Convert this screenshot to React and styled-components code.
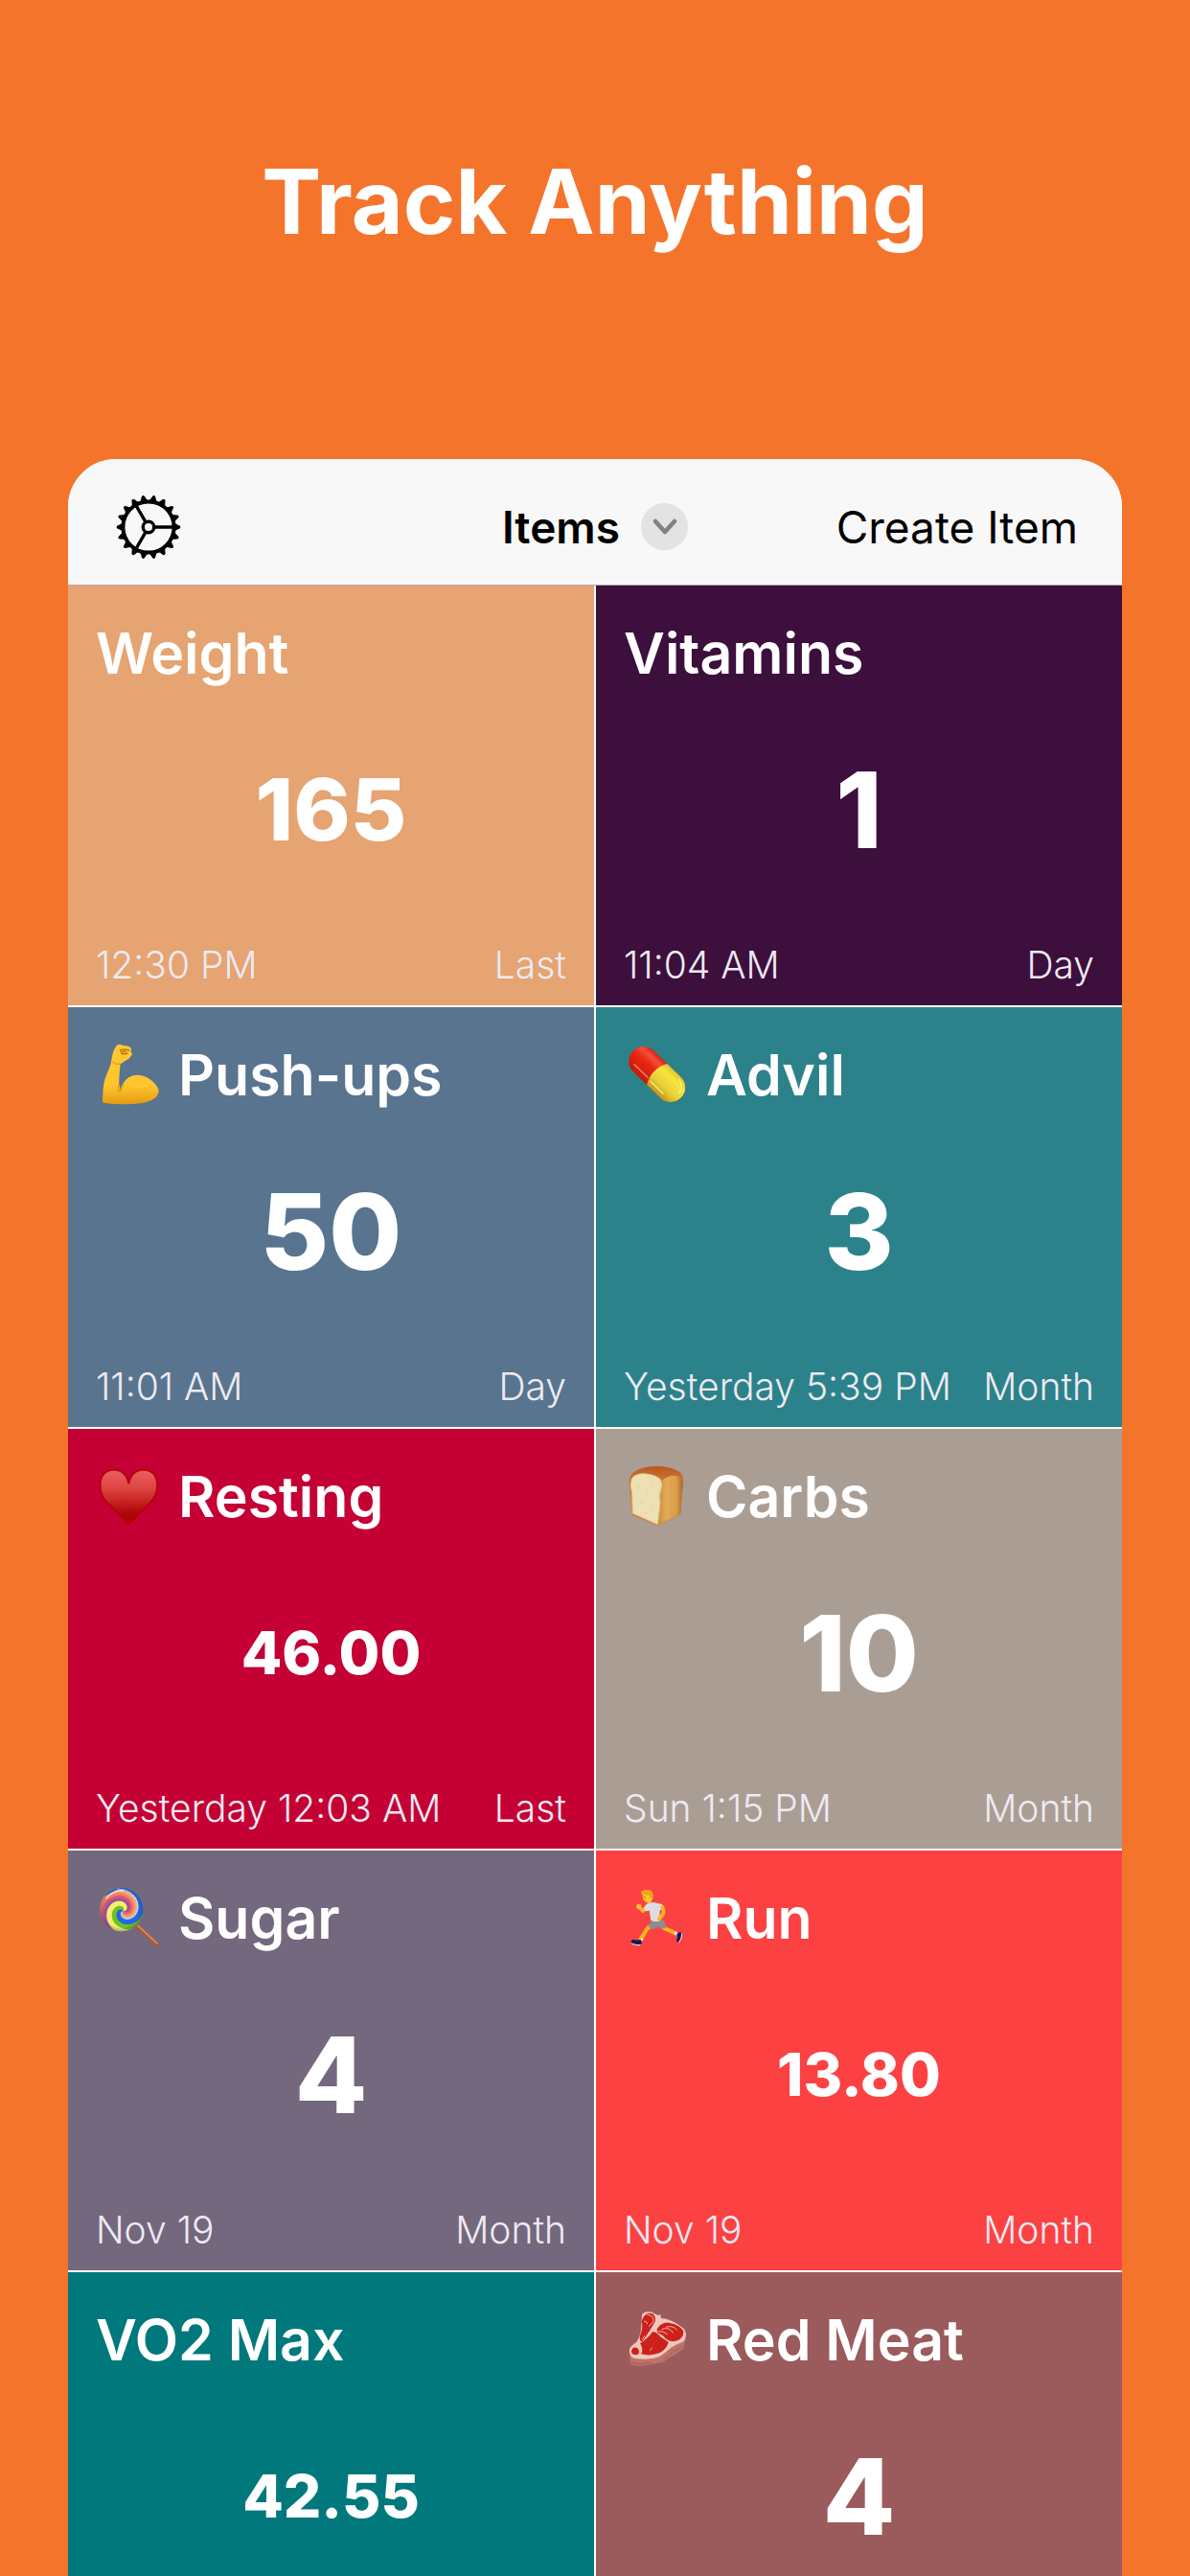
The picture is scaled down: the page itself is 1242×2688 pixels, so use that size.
import React from "react";
import styled, { createGlobalStyle } from "styled-components";

const teeth = Array.from({ length: 18 }, (_, i) => i * 20);

function GearIcon() {
  return (
    <svg width="76" height="76" viewBox="-38 -38 76 76" aria-hidden="true">
      {teeth.map((angle) => (
        <path
          key={angle}
          transform={`rotate(${angle})`}
          d="M27 -4.4 Q29.6 -2.6 32.6 -1.5 Q34.4 0 32.6 1.5 Q29.6 2.6 27 4.4 Z"
        />
      ))}
      <g fill="none" stroke="#000">
        <circle r="26.6" strokeWidth="4" />
        <circle r="5.8" strokeWidth="3.4" />
        {[0, 120, 240].map((angle) => (
          <path key={angle} d="M7 0H26" strokeWidth="3.4" transform={`rotate(${angle})`} />
        ))}
      </g>
    </svg>
  );
}

function ArmIcon() {
  return (
    <svg viewBox="3 60 204 192" aria-hidden="true">
      <defs>
        <linearGradient id="arm" x1="0" y1="0" x2="0" y2="1">
          <stop offset="0" stopColor="#ffc932" />
          <stop offset="0.7" stopColor="#ffc42e" />
          <stop offset="1" stopColor="#e39a12" />
        </linearGradient>
      </defs>
      <path
        fill="url(#arm)"
        d="M70 61 Q76 57 85 62 L97 64 Q106 64 112 70 Q116 75 112 82 Q119 87 115 94 Q108 106 96 110 L80 121 Q75 160 76 184 L79 200 Q88 176 107 162 Q132 149 160 161 Q187 174 199 199 Q202 215 189 227 Q165 244 128 245 Q70 250 26 242 Q22 238 25 219 Q25 181 36 155 Q47 130 51 116 Q54 80 70 61Z"
      />
      <path fill="none" stroke="#b96f08" strokeWidth="4" d="M79 78 Q94 73 108 78 M82 84 Q91 94 103 86 M81 80 L87 92 M87 82 L98 81" />
      <path fill="none" stroke="#d58b10" strokeWidth="3" d="M55 114 Q66 125 79 120 M76 184 Q69 205 79 207 Q84 194 91 184" />
    </svg>
  );
}

function PillIcon() {
  return (
    <svg viewBox="3 60 204 192" aria-hidden="true">
      <defs>
        <linearGradient id="pillRed" x1="0" y1="0" x2="0" y2="1">
          <stop offset="0" stopColor="#d9200f" />
          <stop offset="0.2" stopColor="#f4503c" />
          <stop offset="0.45" stopColor="#ea2812" />
          <stop offset="1" stopColor="#c8180a" />
        </linearGradient>
        <linearGradient id="pillYellow" x1="0" y1="0" x2="0" y2="1">
          <stop offset="0" stopColor="#e2c52c" />
          <stop offset="0.25" stopColor="#f6e640" />
          <stop offset="0.65" stopColor="#e8d038" />
          <stop offset="1" stopColor="#c0941c" />
        </linearGradient>
      </defs>
      <g transform="translate(107 153) rotate(44)">
        <rect x="-105" y="-46" width="210" height="92" rx="46" fill="url(#pillRed)" />
        <path fill="url(#pillYellow)" d="M0 -46 H59 A46 46 0 0 1 59 46 H0 Q-26 0 0 -46Z" />
        <path fill="none" stroke="#fff" strokeOpacity="0.4" strokeWidth="5" strokeLinecap="round" d="M-72 27 H-14" />
        <path fill="none" stroke="#fff6a0" strokeOpacity="0.8" strokeWidth="4" strokeLinecap="round" d="M0 30 H56 M62 -36 Q88 -30 92 -6" />
      </g>
    </svg>
  );
}

function HeartIcon() {
  return (
    <svg viewBox="33 60 204 192" aria-hidden="true">
      <defs>
        <linearGradient id="heart" x1="0" y1="0" x2="0" y2="1">
          <stop offset="0" stopColor="#ea6060" />
          <stop offset="0.35" stopColor="#dd4441" />
          <stop offset="0.8" stopColor="#b00505" />
          <stop offset="1" stopColor="#a80000" />
        </linearGradient>
      </defs>
      <path
        fill="url(#heart)"
        stroke="#b20309"
        strokeWidth="5"
        d="M136 115 Q127 71 88 71 Q47 75 47 120 Q47 152 70 175 Q90 193 110 216 Q124 232 136 242 Q148 232 162 216 Q182 193 202 175 Q225 152 225 120 Q225 75 184 71 Q145 71 136 115Z"
      />
    </svg>
  );
}

function BreadIcon() {
  return (
    <svg viewBox="3 60 204 192" aria-hidden="true">
      <defs>
        <linearGradient id="crust" x1="0" y1="0" x2="1" y2="0">
          <stop offset="0" stopColor="#c98c45" />
          <stop offset="0.35" stopColor="#e2ab55" />
          <stop offset="0.75" stopColor="#d99b47" />
          <stop offset="1" stopColor="#a8662a" />
        </linearGradient>
        <linearGradient id="crustTop" x1="0" y1="0" x2="0" y2="1">
          <stop offset="0" stopColor="#b95820" />
          <stop offset="0.3" stopColor="#cf7c3c" />
          <stop offset="1" stopColor="#c98340" />
        </linearGradient>
      </defs>
      <path fill="url(#crustTop)" d="M21 124 Q17 106 23 94 Q36 67 88 61 Q139 57 174 75 Q194 88 189 117 L181 211 L109 247 L28 213Z" />
      <path fill="url(#crust)" d="M113 121 Q124 96 150 90 Q176 85 188 107 Q191 118 185 137 L181 210 L109 244Z" />
      <path fill="#ece0b4" stroke="#dfc68c" strokeWidth="3" d="M28 100 Q36 84 64 83 Q103 86 118 101 Q126 120 118 138 Q111 155 117 174 L109 242 L31 207 L29 142 Q21 122 28 100Z" />
      <g fill="#d3bf86">
        <circle cx="49" cy="126" r="2" />
        <circle cx="77" cy="145" r="2" />
        <circle cx="92" cy="119" r="2" />
        <circle cx="60" cy="174" r="2" />
        <circle cx="91" cy="193" r="2" />
        <circle cx="72" cy="207" r="2" />
      </g>
    </svg>
  );
}

// start and end angle of each stripe at the rim of the candy
const stripes = [
  { from: 175, to: 215, color: "#f4806e" },
  { from: 213, to: 245, color: "#f6a868" },
  { from: 243, to: 265, color: "#b9d8f2" },
  { from: 263, to: 335, color: "#2467e6" },
  { from: 333, to: 395, color: "#6cc41e" },
  { from: 393, to: 465, color: "#f0f070" },
  { from: 463, to: 507, color: "#9c5296" },
  { from: 505, to: 537, color: "#d9566e" },
];

function stripePath({ from, to }) {
  const point = (angle, radius) => {
    const turn = ((angle + (70 - radius) * 4) * Math.PI) / 180;
    return `${(Math.cos(turn) * radius).toFixed(1)} ${(Math.sin(turn) * radius).toFixed(1)}`;
  };
  const radii = Array.from({ length: 29 }, (_, i) => i * 3);
  const out = radii.map((radius) => point(from, radius));
  const back = [...radii].reverse().map((radius) => point(to, radius));
  return `M${[...out, ...back].join("L")}Z`;
}

function LollipopIcon() {
  return (
    <svg viewBox="33 60 204 192" aria-hidden="true">
      <path stroke="#a65c36" strokeWidth="13" strokeLinecap="round" d="M162 179 L224 237" />
      <path stroke="#e28e55" strokeWidth="5" strokeLinecap="round" d="M165 178 L225 234" />
      <defs>
        <clipPath id="candy">
          <circle cx="113" cy="128" r="68" />
        </clipPath>
        <radialGradient id="candyShade">
          <stop offset="0.82" stopColor="#203060" stopOpacity="0" />
          <stop offset="1" stopColor="#203060" stopOpacity="0.35" />
        </radialGradient>
      </defs>
      <g clipPath="url(#candy)">
        <circle cx="113" cy="128" r="68" fill="#f48a70" />
        {stripes.map((stripe) => (
          <path key={stripe.color} fill={stripe.color} transform="translate(119 132)" d={stripePath(stripe)} />
        ))}
      </g>
      <circle cx="113" cy="128" r="68" fill="url(#candyShade)" />
      <path fill="none" stroke="#fff" strokeOpacity="0.6" strokeWidth="5" strokeLinecap="round" d="M66 92 Q87 67 119 68" />
    </svg>
  );
}

function RunnerIcon() {
  return (
    <svg viewBox="3 60 204 192" aria-hidden="true">
      <g fill="none" stroke="#f7b51b" strokeLinecap="round" strokeLinejoin="round">
        <path strokeWidth="11" d="M77 116 L63 132 L50 120" />
        <path strokeWidth="13" d="M83 182 Q73 190 69 200 L56 221" />
        <path strokeWidth="12" d="M126 184 L165 202" />
      </g>
      <ellipse cx="50" cy="118" rx="8" ry="7" fill="#ffc629" />
      <path fill="#e9e9ed" d="M60 216 L52 224 L59 227 L65 220Z M163 196 L174 201 L169 209 L160 205Z" />
      <path fill="#151b52" d="M30 221 Q43 225 56 222 L60 230 L56 239 Q39 238 27 233 Q24 225 30 221Z M172 201 Q179 197 185 201 Q184 216 175 231 Q169 231 168 225 Q173 213 169 207Z" />
      <path fill="none" stroke="#e8e8ec" strokeWidth="3" d="M27 234 Q41 240 56 239 M185 202 Q186 219 175 232" />
      <path fill="#8e8e92" d="M91 158 L126 160 Q136 173 136 184 L121 189 L112 180 L94 191 L80 181Z" />
      <path fill="#dddde1" d="M77 109 Q91 102 106 107 L123 111 L127 121 L116 131 L115 164 Q100 168 88 161 L83 131 L70 133 L65 123Z" />
      <path fill="none" stroke="#f7b51b" strokeWidth="12" strokeLinecap="round" strokeLinejoin="round" d="M124 120 Q131 134 125 143 L114 158" />
      <path fill="#ffc52a" d="M62 83 Q68 68 84 70 Q96 76 94 93 L86 107 Q71 107 66 98 L63 92Z" />
      <path fill="#eda915" d="M58 81 Q55 69 68 67 Q90 62 94 77 Q97 88 88 94 L82 83Z" />
      <circle cx="69" cy="89" r="2" fill="#70480d" />
    </svg>
  );
}

function MeatIcon() {
  return (
    <svg viewBox="3 60 204 192" aria-hidden="true">
      <path fill="#bd7269" d="M21 184 L24 228 Q34 240 66 235 L127 225 Q145 208 159 205 L192 181 L197 132Z" />
      <path fill="#f0c6bb" d="M60 76 Q65 64 88 67 L110 78 L118 75 L120 87 Q151 88 192 120 Q204 139 192 159 Q175 166 154 177 Q130 198 114 208 Q83 220 34 212 Q19 207 21 183 Q25 173 43 162 Q54 145 56 129 L59 97Z" />
      <g fill="#cc211b">
        <path d="M65 83 Q75 69 90 72 Q104 77 102 96 Q86 125 62 160 Q50 161 54 142 Q65 115 59 96Z" />
        <path d="M54 165 Q74 155 94 129 Q107 131 116 143 L143 162 Q138 184 116 195 Q86 207 58 199 Q65 183 54 165Z" />
        <path d="M107 121 Q120 99 144 101 Q179 107 190 127 Q191 148 172 157 Q143 166 126 142 L108 132Z" />
        <path d="M31 181 Q44 174 50 186 Q54 198 43 202 Q26 202 27 190Z" />
      </g>
      <path fill="none" stroke="#f4b2a7" strokeWidth="3" strokeLinecap="round" d="M77 76 Q99 78 96 98 L82 113 M67 96 Q73 94 77 104 M123 121 Q144 112 158 133 M136 114 Q158 109 169 123 M111 128 Q127 125 139 137 M68 143 L61 154 M86 188 L91 180" />
      <path fill="none" stroke="#8d4845" strokeWidth="3" strokeOpacity="0.5" d="M29 226 Q56 233 89 226 M126 219 L158 192 L191 174" />
    </svg>
  );
}

const items = [
  { name: "Weight", value: "165", size: "medium", time: "12:30 PM", period: "Last", color: "#e5a472" },
  { name: "Vitamins", value: "1", size: "large", time: "11:04 AM", period: "Day", color: "#3c0f3c" },
  { name: "Push-ups", icon: ArmIcon, value: "50", size: "large", time: "11:01 AM", period: "Day", color: "#58748f" },
  { name: "Advil", icon: PillIcon, value: "3", size: "large", time: "Yesterday 5:39 PM", period: "Month", color: "#2c828a" },
  { name: "Resting", icon: HeartIcon, value: "46.00", size: "small", time: "Yesterday 12:03 AM", period: "Last", color: "#c40034" },
  { name: "Carbs", icon: BreadIcon, value: "10", size: "large", time: "Sun 1:15 PM", period: "Month", color: "#aa9e94" },
  { name: "Sugar", icon: LollipopIcon, value: "4", size: "large", time: "Nov 19", period: "Month", color: "#73687d" },
  { name: "Run", icon: RunnerIcon, value: "13.80", size: "small", time: "Nov 19", period: "Month", color: "#fc4143" },
  { name: "VO2 Max", value: "42.55", size: "small", color: "#00787c" },
  { name: "Red Meat", icon: MeatIcon, value: "4", size: "large", color: "#9b5a5c" },
];

const valueSizes = { small: "62px", medium: "90px", large: "110px" };

export default function App() {
  return (
    <Page>
      <GlobalStyle />
      <Headline>Track Anything</Headline>
      <Panel>
        <Toolbar>
          <SettingsButton aria-label="Settings">
            <GearIcon />
          </SettingsButton>
          <ListButton>
            Items
            <Chevron>
              <svg width="28" height="20" viewBox="0 0 28 20" aria-hidden="true">
                <path d="M4 4 L14 15 L24 4" fill="none" stroke="#828285" strokeWidth="4.6" strokeLinecap="round" strokeLinejoin="round" />
              </svg>
            </Chevron>
          </ListButton>
          <CreateButton>Create Item</CreateButton>
        </Toolbar>
        <Tiles>
          {items.map((item) => (
            <Tile key={item.name} $color={item.color}>
              <Name>
                {item.icon && <item.icon />}
                {item.name}
              </Name>
              <Value $size={valueSizes[item.size]}>{item.value}</Value>
              <Details>
                <span>{item.time}</span>
                <span>{item.period}</span>
              </Details>
            </Tile>
          ))}
        </Tiles>
      </Panel>
    </Page>
  );
}

const GlobalStyle = createGlobalStyle`
  * {
    box-sizing: border-box;
  }
  body {
    margin: 0;
    background-color: #f4742c;
    font-family: Inter, "Liberation Sans", sans-serif;
  }
  button {
    border: 0;
    padding: 0;
    background: none;
    color: #000000;
    font-family: inherit;
    font-size: 46px;
    line-height: 60px;
  }
`;

const Page = styled.main`
  height: 100vh;
  overflow: hidden;
  padding: 0 71px;
  background-color: #f4742c;
`;

const Headline = styled.h1`
  margin: 0;
  padding: 150px 0 209px;
  font-size: 93px;
  font-weight: 700;
  line-height: 120px;
  text-align: center;
  color: #ffffff;
`;

const Panel = styled.section`
  overflow: hidden;
  border-radius: 50px 50px 0 0;
  background-color: #ffffff;
`;

const Toolbar = styled.header`
  display: grid;
  grid-template-columns: 1fr auto 1fr;
  align-items: center;
  height: 132px;
  padding: 10px 46px 0;
  background-color: #f8f8f8;
  border-bottom: 1px solid #b5a9a5;
`;

const SettingsButton = styled.button`
  display: flex;
  justify-self: start;
`;

const ListButton = styled.button`
  display: flex;
  align-items: center;
  gap: 22px;
  font-weight: 600;
`;

const Chevron = styled.span`
  display: flex;
  align-items: center;
  justify-content: center;
  width: 49px;
  height: 49px;
  border-radius: 50%;
  background-color: #e3e3e3;
`;

const CreateButton = styled.button`
  justify-self: end;
`;

const Tiles = styled.div`
  display: grid;
  grid-template-columns: 1fr 1fr;
  grid-auto-rows: 438px;
  gap: 2px;
`;

const Tile = styled.article`
  display: flex;
  flex-direction: column;
  padding: 39px 29px 14px;
  background-color: ${(props) => props.$color};
  color: #ffffff;
`;

const Name = styled.h2`
  display: flex;
  align-items: center;
  gap: 18px;
  margin: 0;
  font-size: 59px;
  font-weight: 600;
  line-height: 64px;
  svg {
    width: 68px;
    height: 64px;
  }
`;

const Value = styled.div`
  display: flex;
  flex: 1;
  align-items: center;
  justify-content: center;
  padding-bottom: 4px;
  font-size: ${(props) => props.$size};
  font-weight: 800;
  line-height: 120px;
`;

const Details = styled.div`
  display: flex;
  justify-content: space-between;
  min-height: 56px;
  font-size: 39px;
  font-weight: 300;
  line-height: 56px;
  color: #eeeaf2;
`;
